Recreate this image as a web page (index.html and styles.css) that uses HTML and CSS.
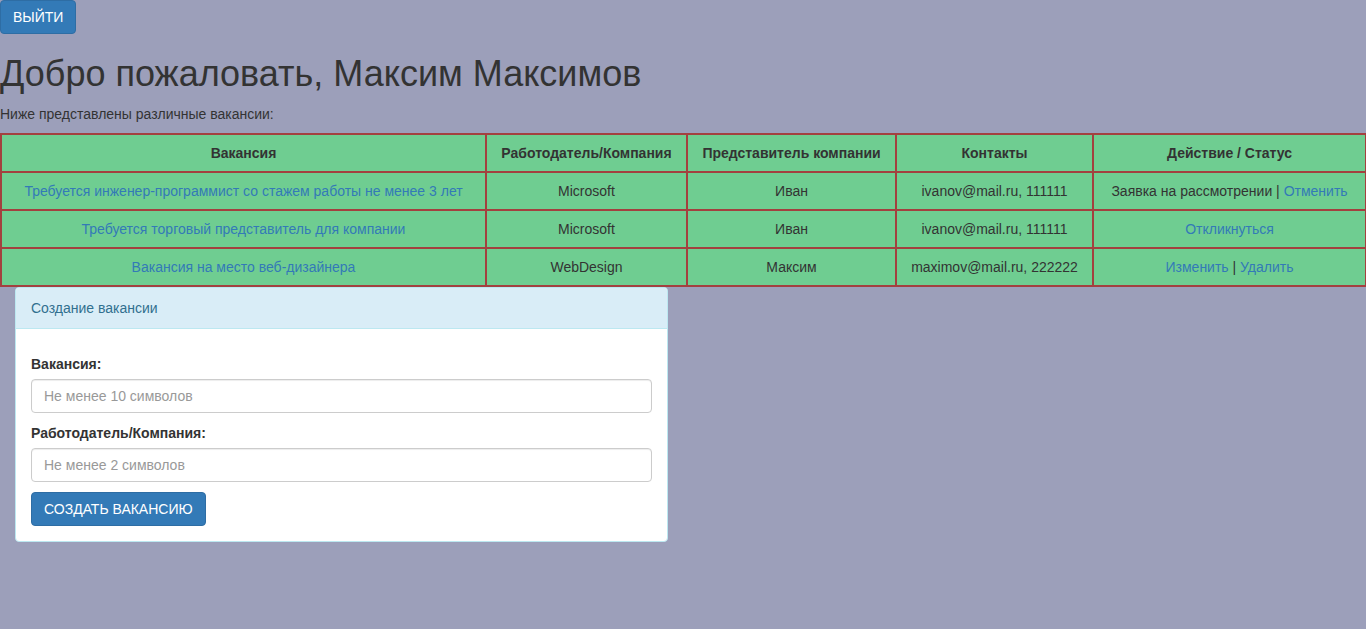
FILE: index.html
```html
<!DOCTYPE html>
<html lang="ru">
<head>
<meta charset="utf-8">
<title>Вакансии</title>
<link rel="stylesheet" href="styles.css">
</head>
<body>
<button class="btn btn-primary">ВЫЙТИ</button>
<h1 class="title">Добро пожаловать, Максим Максимов</h1>
<p class="lead-text">Ниже представлены различные вакансии:</p>
<table class="jobs">
  <colgroup>
    <col class="c1"><col class="c2"><col class="c3"><col class="c4"><col class="c5">
  </colgroup>
  <thead>
    <tr>
      <th>Вакансия</th>
      <th>Работодатель/Компания</th>
      <th>Представитель компании</th>
      <th>Контакты</th>
      <th>Действие / Статус</th>
    </tr>
  </thead>
  <tbody>
    <tr>
      <td><a href="#">Требуется инженер-программист со стажем работы не менее 3 лет</a></td>
      <td>Microsoft</td>
      <td>Иван</td>
      <td>ivanov@mail.ru, 111111</td>
      <td>Заявка на рассмотрении | <a href="#">Отменить</a></td>
    </tr>
    <tr>
      <td><a href="#">Требуется торговый представитель для компании</a></td>
      <td>Microsoft</td>
      <td>Иван</td>
      <td>ivanov@mail.ru, 111111</td>
      <td><a href="#">Откликнуться</a></td>
    </tr>
    <tr>
      <td><a href="#">Вакансия на место веб-дизайнера</a></td>
      <td>WebDesign</td>
      <td>Максим</td>
      <td>maximov@mail.ru, 222222</td>
      <td><a href="#">Изменить</a> | <a href="#">Удалить</a></td>
    </tr>
  </tbody>
</table>
<div class="row">
  <div class="col-half">
    <div class="panel">
      <div class="panel-heading">Создание вакансии</div>
      <div class="panel-body">
        <div class="form-group">
          <label class="lbl">Вакансия:</label>
          <input class="form-control" type="text" placeholder="Не менее 10 символов">
        </div>
        <div class="form-group">
          <label class="lbl">Работодатель/Компания:</label>
          <input class="form-control" type="text" placeholder="Не менее 2 символов">
        </div>
        <button class="btn btn-primary">СОЗДАТЬ ВАКАНСИЮ</button>
      </div>
    </div>
  </div>
</div>
</body>
</html>
```

FILE: styles.css
```css
* { box-sizing: border-box; }
html, body { margin: 0; padding: 0; }
body {
  background: #9c9fba;
  font-family: "Liberation Sans", Arial, Helvetica, sans-serif;
  font-size: 14px;
  line-height: 20px;
  color: #333;
}
a { color: #337ab7; text-decoration: none; }

.btn {
  display: inline-block;
  font-family: inherit;
  font-size: 14px;
  line-height: 20px;
  padding: 6px 12px;
  border-radius: 4px;
  border: 1px solid transparent;
  cursor: pointer;
  vertical-align: top;
}
.btn-primary {
  background: #337ab7;
  border-color: #2e6da4;
  color: #fff;
}

.title {
  font-size: 36px;
  font-weight: 500;
  line-height: 1.1;
  margin: 20px 0 10px;
}
.lead-text { margin: 0 0 9px; }

.jobs {
  width: calc(100% - 1px);
  border-collapse: collapse;
  table-layout: fixed;
  background: #6fcd91;
}
.jobs .c1 { width: 485px; }
.jobs .c2 { width: 201px; }
.jobs .c3 { width: 209px; }
.jobs .c4 { width: 197px; }
.jobs .c5 { width: 273px; }
.jobs th, .jobs td {
  border: 2px solid #a3403f;
  padding: 8px;
  text-align: center;
  line-height: 20px;
  white-space: nowrap;
}
.jobs th { font-weight: bold; }

.row { display: flex; }
.col-half { width: 50%; padding: 0 15px; }

.panel {
  background: #fff;
  border: 1px solid #bce8f1;
  border-radius: 4px;
}
.panel-heading {
  background: #d9edf7;
  color: #31708f;
  border-bottom: 1px solid #bce8f1;
  padding: 10px 15px;
  border-radius: 3px 3px 0 0;
}
.panel-body { padding: 25px 15px 15px; }
.form-group { margin-bottom: 10px; }
.lbl {
  display: block;
  font-weight: bold;
  margin-bottom: 5px;
}
.form-control {
  display: block;
  width: 100%;
  height: 34px;
  padding: 6px 12px;
  font-family: inherit;
  font-size: 14px;
  color: #555;
  background: #fff;
  border: 1px solid #ccc;
  border-radius: 4px;
  box-shadow: inset 0 1px 1px rgba(0,0,0,.075);
}
.form-control::placeholder { color: #999; }
```
